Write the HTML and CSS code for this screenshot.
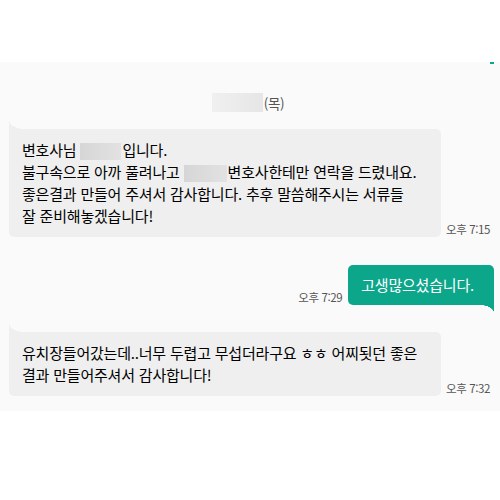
FILE: index.html
```html
<!DOCTYPE html>
<html lang="ko">
<head>
    <meta charset="UTF-8">
    <meta name="viewport" content="width=device-width, initial-scale=1.0">
    <title>대화</title>
    <link rel="stylesheet" href="styles.css">
</head>
<body>
    <div class="chat">
        <div class="date">
            <span class="blur date-blur"></span>
            <span class="day">(목)</span>
        </div>

        <div class="row left first">
            <div class="bubble gray">
                변호사님 <span class="blur name1"></span>입니다.<br>
                불구속으로 아까 풀려나고 <span class="blur name2"></span>변호사한테만 연락을 드렸내요.<br>
                좋은결과 만들어 주셔서 감사합니다. 추후 말씀해주시는 서류들<br>
                잘 준비해놓겠습니다!
            </div>
            <span class="time">오후 7:15</span>
        </div>

        <div class="row right">
            <span class="time">오후 7:29</span>
            <div class="bubble green">고생많으셨습니다.</div>
        </div>

        <div class="row left last">
            <div class="bubble gray">
                유치장들어갔는데..너무 두렵고 무섭더라구요 ㅎㅎ 어찌됫던 좋은<br>
                결과 만들어주셔서 감사합니다!
            </div>
            <span class="time">오후 7:32</span>
        </div>
    </div>
</body>
</html>
```

FILE: styles.css
```css
body {
    margin: 0;
    padding: 0;
    background-color: #ffffff;
    font-family: "Noto Sans CJK KR", "Noto Sans", sans-serif;
}
.chat {
    margin-top: 62px;
    padding: 31px 6px 15px 9px;
    background-color: #fafafa;
    position: relative;
}
/* cut-off tail of the previous message */
.chat::before {
    content: '';
    position: absolute;
    top: 0;
    right: 6px;
    width: 4px;
    height: 2px;
    background-color: #0ca68b;
}
.date {
    display: flex;
    justify-content: center;
    align-items: center;
    gap: 1px;
    height: 19px;
    margin-bottom: 17px;
    padding-right: 7px;
}
.day {
    font-size: 13.5px;
    color: #555;
    letter-spacing: -0.4px;
}
.blur {
    display: inline-block;
    vertical-align: middle;
}
.date-blur {
    width: 51px;
    height: 19px;
    background: linear-gradient(90deg, #f0f0f0, #e6e6e6);
}
.name1 {
    width: 41px;
    height: 17px;
    margin-right: 1px;
    background: linear-gradient(90deg, #d6d6d6, #e2e2e2);
}
.name2 {
    width: 43px;
    height: 17px;
    margin-right: 1px;
    background: linear-gradient(90deg, #d6d6d6, #e2e2e2);
}
.row {
    display: flex;
    align-items: flex-end;
    gap: 5px;
}
.row.right {
    justify-content: flex-end;
    gap: 6px;
    margin-top: 28px;
}
.row.last {
    margin-top: 27px;
}
.bubble {
    position: relative;
    font-size: 15px;
    line-height: 22px;
    letter-spacing: -0.2px;
    border-radius: 5px;
}
.bubble.gray {
    width: 432px;
    box-sizing: border-box;
    padding: 10px 13px;
    background-color: #efefef;
    color: #000;
    border-top-left-radius: 0;
}
.bubble.gray::before {
    content: '';
    position: absolute;
    left: 0;
    top: -9px;
    width: 15px;
    height: 9px;
    background: radial-gradient(ellipse 15px 9px at 100% 0, transparent 98%, #efefef 100%);
}
.bubble.green {
    height: 40px;
    box-sizing: border-box;
    padding: 9px 20px 9px 13px;
    background-color: #0ca68b;
    color: #ffffff;
    border-bottom-right-radius: 0;
}
.bubble.green::after {
    content: '';
    position: absolute;
    right: 0;
    bottom: -8px;
    width: 14px;
    height: 8px;
    background: radial-gradient(ellipse 14px 8px at 0 100%, transparent 98%, #0ca68b 100%);
}
.time {
    font-size: 11.5px;
    line-height: 16px;
    color: #555;
    letter-spacing: -0.4px;
    white-space: nowrap;
}
```
